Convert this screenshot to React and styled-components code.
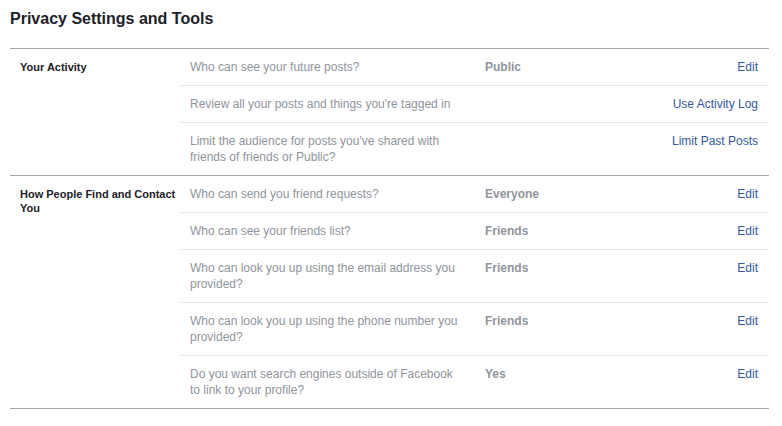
import React from 'react'
import styled, { createGlobalStyle } from 'styled-components'

const GlobalStyle = createGlobalStyle`
  body {
    margin: 0;
    background: #fff;
    font-family: "Liberation Sans", Arial, Helvetica, sans-serif;
  }
`

const Page = styled.div`
  width: 759px;
  padding-left: 10px;
`

const Title = styled.h1`
  margin: 0;
  padding-top: 9px;
  height: 39px;
  font-size: 16px;
  line-height: 20px;
  font-weight: bold;
  color: #1d2129;
`

const Section = styled.div`
  display: flex;
  border-top: 1px solid #a8a8a8;
  &:last-child {
    border-bottom: 1px solid #a8a8a8;
  }
`

const Label = styled.div`
  width: 160px;
  flex-shrink: 0;
  padding: 10px 0 0 10px;
  font-size: 11px;
  line-height: 14px;
  font-weight: bold;
  color: #1d2129;
  position: relative;
  top: 1px;
`

const Rows = styled.div`
  flex: 1;
`

const Row = styled.div`
  display: flex;
  padding: 10px 11px 10px 10px;
  font-size: 12px;
  line-height: 16px;
  & + & {
    border-top: 1px solid #e5e5e5;
  }
`

const Question = styled.div`
  width: 270px;
  flex-shrink: 0;
  color: #90949c;
`

const Value = styled.div`
  flex: 1;
  padding-left: 25px;
  font-weight: bold;
  color: #90949c;
`

const Action = styled.a`
  color: #365899;
  text-decoration: none;
  cursor: pointer;
  white-space: nowrap;
`

const sections = [
  {
    label: 'Your Activity',
    rows: [
      ['Who can see your future posts?', 'Public', 'Edit'],
      ["Review all your posts and things you're tagged in", '', 'Use Activity Log'],
      ["Limit the audience for posts you've shared with friends of friends or Public?", '', 'Limit Past Posts'],
    ],
  },
  {
    label: 'How People Find and Contact You',
    rows: [
      ['Who can send you friend requests?', 'Everyone', 'Edit'],
      ['Who can see your friends list?', 'Friends', 'Edit'],
      ['Who can look you up using the email address you provided?', 'Friends', 'Edit'],
      ['Who can look you up using the phone number you provided?', 'Friends', 'Edit'],
      ['Do you want search engines outside of Facebook to link to your profile?', 'Yes', 'Edit'],
    ],
  },
]

const App = () => (
  <>
    <GlobalStyle />
    <Page>
      <Title>Privacy Settings and Tools</Title>
      <div>
        {sections.map((section) => (
          <Section key={section.label}>
            <Label>{section.label}</Label>
            <Rows>
              {section.rows.map(([question, value, action]) => (
                <Row key={question}>
                  <Question>{question}</Question>
                  <Value>{value}</Value>
                  <Action>{action}</Action>
                </Row>
              ))}
            </Rows>
          </Section>
        ))}
      </div>
    </Page>
  </>
)

export default App
